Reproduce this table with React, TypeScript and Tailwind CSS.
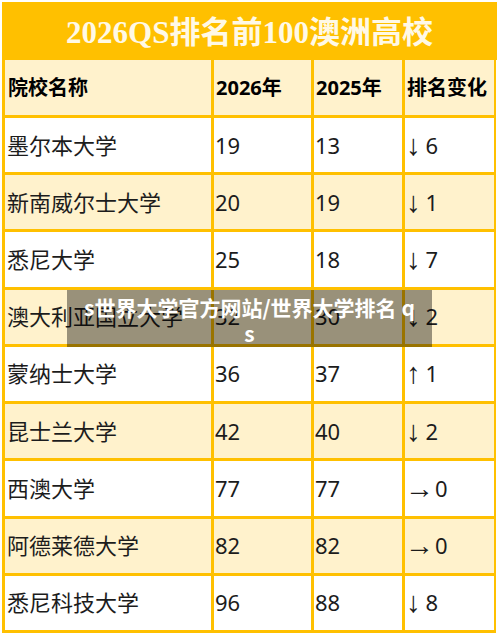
import React from "react";

const rows: [string, string, string, string, string][] = [
  ["墨尔本大学", "19", "13", "↓", "6"],
  ["新南威尔士大学", "20", "19", "↓", "1"],
  ["悉尼大学", "25", "18", "↓", "7"],
  ["澳大利亚国立大学", "32", "30", "↓", "2"],
  ["蒙纳士大学", "36", "37", "↑", "1"],
  ["昆士兰大学", "42", "40", "↓", "2"],
  ["西澳大学", "77", "77", "→", "0"],
  ["阿德莱德大学", "82", "82", "→", "0"],
  ["悉尼科技大学", "96", "88", "↓", "8"],
];

export default function App() {
  return (
    <div className="relative w-[500px] h-[637px] bg-white overflow-hidden">
      <div className="ml-[2px] mt-[2px] w-[495px]">
        <div
          className="h-[58px] bg-[#FFC000] flex items-center justify-center text-[#FFF9E6] text-[31px] font-bold leading-none"
          style={{ fontFamily: '"Liberation Serif", "Noto Sans CJK SC", serif' }}
        >
          <span className="pt-[2px]">2026QS排名前100澳洲高校</span>
        </div>
        <div
          className="grid grid-cols-[206px_97px_88px_89px] grid-rows-[55px_repeat(9,1fr)] gap-[3px] px-[3px] pb-[3px] h-[573px] bg-[#FFC000] w-[494px]"
          style={{ fontFamily: '"Noto Sans", "Noto Sans CJK SC", sans-serif' }}
        >
          {["院校名称", "2026年", "2025年", "排名变化"].map((h, i) => (
            <div
              key={i}
              className={`bg-[#FFF2CC] flex items-center text-[20px] font-bold text-black ${i === 0 ? "pl-[3px]" : "pl-[2px]"}`}
            >
              {h}
            </div>
          ))}
          {rows.map((r, ri) => {
            const bg = ri % 2 === 1 ? "bg-[#FFF2CC]" : "bg-white";
            const side = r[3] === "→";
            return (
              <React.Fragment key={ri}>
                <div className={`${bg} flex items-center text-[22px] text-[#1c1c1c] whitespace-nowrap pl-[2px]`}>{r[0]}</div>
                <div className={`${bg} flex items-center text-[22px] text-[#1c1c1c] whitespace-nowrap pl-[1px]`}>{r[1]}</div>
                <div className={`${bg} flex items-center text-[22px] text-[#1c1c1c] whitespace-nowrap pl-[1px]`}>{r[2]}</div>
                <div className={`${bg} flex items-center text-[22px] text-[#1c1c1c] whitespace-nowrap ${side ? "pl-0" : "pl-[1px]"}`}>
                  <span
                    className="text-[29px] leading-none"
                    style={{ fontFamily: '"Liberation Sans", sans-serif' }}
                  >
                    {r[3]}
                  </span>
                  <span className={side ? "ml-[1px]" : "ml-[5px]"}>{r[4]}</span>
                </div>
              </React.Fragment>
            );
          })}
        </div>
      </div>
      <div
        className="absolute left-[67px] top-[290px] w-[365px] h-[57px] bg-black/40 pt-[4px] text-center text-white text-[21px] font-bold leading-[26px]"
        style={{ fontFamily: '"Noto Sans CJK SC", sans-serif' }}
      >
        s世界大学官方网站/世界大学排名 q
        <br />s
      </div>
    </div>
  );
}
